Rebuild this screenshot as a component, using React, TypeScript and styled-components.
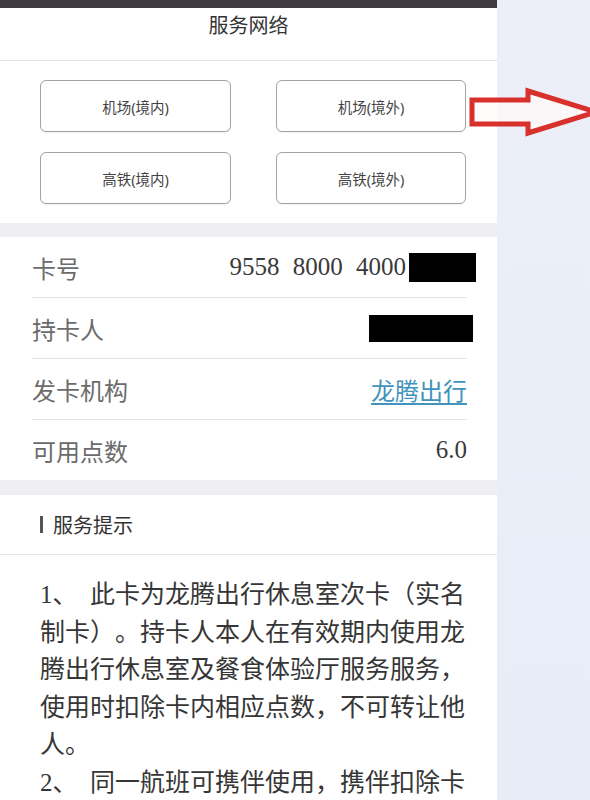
import styled, { createGlobalStyle } from "styled-components";

const GlobalStyle = createGlobalStyle`
  html, body {
    margin: 0;
    padding: 0;
    background: #e9eef7;
  }
  * {
    box-sizing: border-box;
  }
`;

const Page = styled.div`
  position: relative;
  display: flex;
  align-items: flex-start;
  height: 800px;
  overflow: hidden;
  background: linear-gradient(180deg, #eceff8 0%, #e7edf7 100%);
  font-family: "Liberation Serif", "Noto Sans CJK SC", serif;
`;

const Phone = styled.div`
  width: 497px;
  flex-shrink: 0;
  background: #f0f0f4;
`;

const StatusBar = styled.div`
  height: 8px;
  background: #3d3b3f;
`;

const Header = styled.div`
  height: 53px;
  padding-top: 4px;
  background: #fff;
  border-bottom: 1px solid #e2e2e4;
  text-align: center;
`;

const Title = styled.h1`
  margin: 0;
  font-family: "Noto Sans CJK SC", sans-serif;
  font-size: 20px;
  line-height: 26px;
  font-weight: 400;
  color: #333;
`;

const NetGrid = styled.div`
  display: grid;
  grid-template-columns: 191px 190px;
  column-gap: 45px;
  row-gap: 20px;
  padding: 19px 31px 19px 40px;
  background: #fff;
`;

const NetButton = styled.button`
  height: 52px;
  border: 1px solid #a3a3a6;
  border-radius: 6px;
  background: #fff;
  font-family: "Noto Sans", "Noto Sans CJK SC", sans-serif;
  font-size: 14.5px;
  color: #444;
  padding: 0;
  box-shadow: 0 1px 1px rgba(0, 0, 0, 0.06);
`;

const Gap = styled.div<{ $h: number }>`
  height: ${(p) => p.$h}px;
  background: #efeff3;
`;

const InfoList = styled.div`
  background: #fff;
  padding: 0 30px 0 32px;
`;

const InfoRow = styled.div`
  height: 61px;
  display: flex;
  align-items: center;
  justify-content: space-between;
  border-bottom: 1px solid #e4e4e6;
  &:last-child {
    height: 60px;
    border-bottom: none;
  }
`;

const Label = styled.span`
  font-family: "Noto Sans CJK SC", sans-serif;
  font-size: 24px;
  color: #6b6b6b;
`;

const Value = styled.span`
  display: flex;
  align-items: center;
  font-size: 25px;
  color: #3a3a3a;
  word-spacing: 7px;
`;

const LinkValue = styled.a`
  font-family: "Noto Sans CJK SC", sans-serif;
  font-size: 24px;
  color: #3f93bd;
  text-decoration: underline;
  text-underline-offset: 3px;
`;

const Redact = styled.span<{ $w: number; $h: number; $shift: number }>`
  display: inline-block;
  width: ${(p) => p.$w}px;
  height: ${(p) => p.$h}px;
  margin-left: 3px;
  margin-right: ${(p) => -p.$shift}px;
  background: #000;
`;

const Tips = styled.div`
  background: #fff;
  padding-bottom: 40px;
`;

const TipsHeader = styled.div`
  height: 60px;
  display: flex;
  align-items: center;
  padding-left: 40px;
  border-bottom: 1px solid #e4e4e6;
`;

const TipsTitle = styled.h2`
  margin: 0;
  padding-left: 10px;
  border-left: 3px solid #555;
  font-family: "Noto Sans CJK SC", sans-serif;
  font-size: 20px;
  line-height: 17px;
  font-weight: 400;
  color: #333;
`;

const TipsBody = styled.div`
  padding: 21px 22px 0 40px;
  font-size: 25px;
  line-height: 37.5px;
  color: #363636;
  text-spacing-trim: space-all;
`;

const Tip = styled.p`
  margin: 0;
`;

const Arrow = styled.svg`
  position: absolute;
  left: 466px;
  top: 86px;
`;

const networks = ["机场(境内)", "机场(境外)", "高铁(境内)", "高铁(境外)"];

const tips = [
  "此卡为龙腾出行休息室次卡（实名制卡）。持卡人本人在有效期内使用龙腾出行休息室及餐食体验厅服务服务，使用时扣除卡内相应点数，不可转让他人。",
  "同一航班可携伴使用，携伴扣除卡内相应点数。",
];

export default function App() {
  return (
    <>
      <GlobalStyle />
      <Page>
        <Phone>
          <StatusBar />
          <Header>
            <Title>服务网络</Title>
          </Header>
          <NetGrid>
            {networks.map((n) => (
              <NetButton key={n}>{n}</NetButton>
            ))}
          </NetGrid>
          <Gap $h={14} />
          <InfoList>
            <InfoRow>
              <Label>卡号</Label>
              <Value>
                9558 8000 4000
                <Redact $w={67} $h={29} $shift={9} />
              </Value>
            </InfoRow>
            <InfoRow>
              <Label>持卡人</Label>
              <Value>
                <Redact $w={104} $h={27} $shift={6} />
              </Value>
            </InfoRow>
            <InfoRow>
              <Label>发卡机构</Label>
              <LinkValue>龙腾出行</LinkValue>
            </InfoRow>
            <InfoRow>
              <Label>可用点数</Label>
              <Value>6.0</Value>
            </InfoRow>
          </InfoList>
          <Gap $h={15} />
          <Tips>
            <TipsHeader>
              <TipsTitle>服务提示</TipsTitle>
            </TipsHeader>
            <TipsBody>
              {tips.map((t, i) => (
                <Tip key={i}>{`${i + 1}、\u00a0\u00a0${t}`}</Tip>
              ))}
            </TipsBody>
          </Tips>
        </Phone>
        <Arrow width="124" height="52" viewBox="0 0 124 52">
          <path
            d="M6 14 H62 V5 L130 26 L62 47 V38 H6 Z"
            fill="rgba(255,250,250,0.75)"
            stroke="#d8302b"
            strokeWidth="5"
            strokeLinejoin="miter"
          />
        </Arrow>
      </Page>
    </>
  );
}
